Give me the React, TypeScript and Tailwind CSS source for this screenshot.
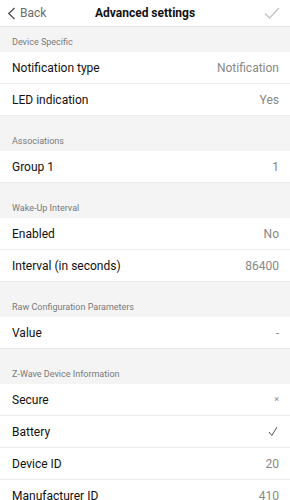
import { ReactNode } from 'react';

type Row = { label: string; value: ReactNode };
type Section = { title: string; rows: Row[] };

const sections: Section[] = [
  {
    title: 'Device Specific',
    rows: [
      { label: 'Notification type', value: 'Notification' },
      { label: 'LED indication', value: 'Yes' },
    ],
  },
  { title: 'Associations', rows: [{ label: 'Group 1', value: '1' }] },
  {
    title: 'Wake-Up Interval',
    rows: [
      { label: 'Enabled', value: 'No' },
      { label: 'Interval (in seconds)', value: '86400' },
    ],
  },
  { title: 'Raw Configuration Parameters', rows: [{ label: 'Value', value: '-' }] },
  {
    title: 'Z-Wave Device Information',
    rows: [
      { label: 'Secure', value: <span className="text-[9px]">×</span> },
      {
        label: 'Battery',
        value: (
          <svg width="10" height="11" viewBox="0 0 10 11" className="mr-[1px]">
            <path d="M1 6 L3.8 9.5 L9 1" fill="none" stroke="#555" strokeWidth="1" />
          </svg>
        ),
      },
      { label: 'Device ID', value: '20' },
      { label: 'Manufacturer ID', value: '410' },
    ],
  },
];

export default function App() {
  return (
    <div className="w-[290px] h-[500px] overflow-hidden bg-[#f4f4f4] font-['Roboto',sans-serif]">
      {/* top bar */}
      <div className="h-[27px] bg-white border-b border-[#e6e6e6] flex items-center px-[7px] relative">
        <div className="flex items-center gap-[4px] text-[12px] text-[#6b6b6b]">
          <svg width="9" height="13" viewBox="0 0 9 13">
            <path d="M7.5 1 L1.8 6.5 L7.5 12" fill="none" stroke="#555" strokeWidth="1.4" />
          </svg>
          <span>Back</span>
        </div>
        <div className="absolute left-0 right-0 text-center text-[12px] font-bold text-[#111] pointer-events-none">
          Advanced settings
        </div>
        <svg width="16" height="12" viewBox="0 0 16 12" className="ml-auto mr-[3px]">
          <path d="M1 6.5 L5.5 11 L15 1" fill="none" stroke="#c4c4c4" strokeWidth="1.3" />
        </svg>
      </div>

      {sections.map((s, i) => (
        <div key={s.title} className={i === 0 ? '' : 'pt-[10px]'}>
          <div className="h-[25px] flex items-end pb-[4px] px-[12px] text-[9px] leading-[11px] text-[#7a7a7a]">
            {s.title}
          </div>
          {s.rows.map((r) => (
            <div
              key={r.label}
              className="h-[32px] bg-white border-b border-[#ebebeb] flex items-center justify-between pl-[12px] pr-[11px]"
            >
              <span className="text-[12px] text-[#111]">{r.label}</span>
              <span className="text-[12px] text-[#888] flex items-center">{r.value}</span>
            </div>
          ))}
        </div>
      ))}
    </div>
  );
}
